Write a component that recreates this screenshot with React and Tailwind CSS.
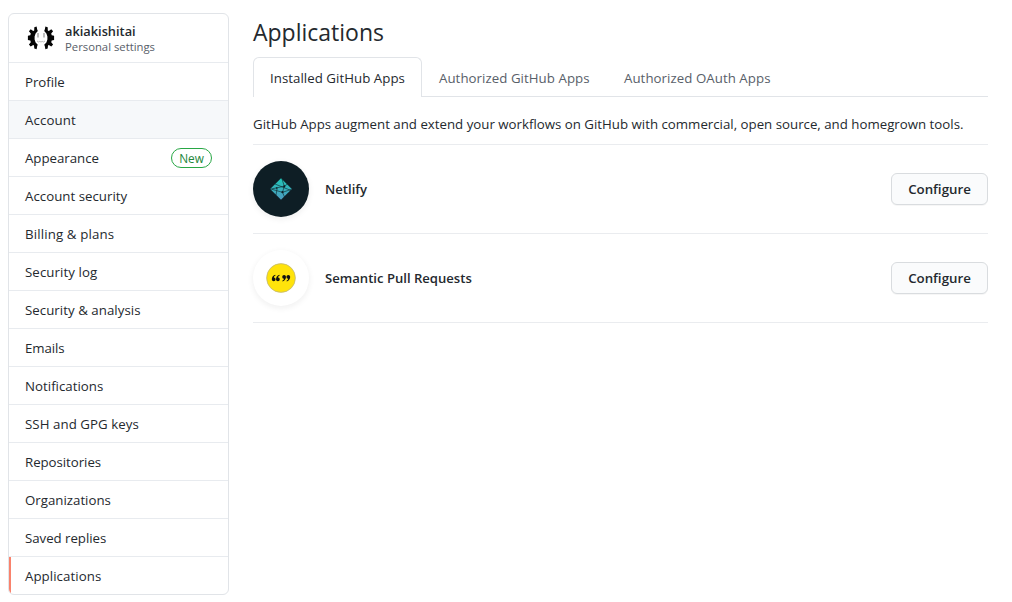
const navItems = [
  { label: "Profile", track: "tracking-[-0.03px]" },
  { label: "Account", track: "tracking-[0.1px]", hovered: true },
  { label: "Appearance", track: "tracking-[-0.03px]", badge: "New" },
  { label: "Account security", track: "tracking-[0.02px]" },
  { label: "Billing & plans", track: "tracking-[0.14px]" },
  { label: "Security log", track: "tracking-[0.08px]" },
  { label: "Security & analysis", track: "tracking-[0.04px]" },
  { label: "Emails", track: "tracking-[-0.1px]" },
  { label: "Notifications", track: "tracking-[0.02px]" },
  { label: "SSH and GPG keys", track: "tracking-[0.06px]" },
  { label: "Repositories", track: "tracking-[-0.05px]" },
  { label: "Organizations", track: "tracking-[0px]" },
  { label: "Saved replies", track: "tracking-[-0.04px]" },
  { label: "Applications", track: "tracking-[0.06px]", current: true },
];

const GEAR_HALF =
  "M9.200 8.400 L9.300 5.200 L11.600 4.400 L12.200 7.600 L12.800 9 L10.600 11.500 L9.600 14.500 L9.600 17.500 L10.600 20.500 L12.800 22.800 L12.200 24 L11.600 27.200 L9.300 26.400 L9 23.400 L8.200 22.900 L5.700 24.400 L3.900 22.400 L5.800 20.200 L5.300 18.400 L2.900 17.900 L2.900 13.700 L5.300 13.200 L5.800 11.400 L3.900 9.200 L5.700 7.200 L8.200 8.900 Z";

function UserAvatar() {
  return (
    <svg className="h-8 w-8 shrink-0" viewBox="0 0 32 32" aria-hidden="true">
      <g fill="#050505">
        <path d={GEAR_HALF} />
        <path transform="translate(32 0) scale(-1 1)" d={GEAR_HALF} />
      </g>
      <path d="M13 11v4.500M19 11v4.500" stroke="#888" strokeWidth="1.100" />
      <path d="M12 19l1.600 1 1.200-.6 1.200.6 1.200-.6 1.200.6 1.600-1" stroke="#bbb" strokeWidth="1" fill="none" />
    </svg>
  );
}

function NetlifyLogo() {
  return (
    <svg className="h-[22px] w-[22px]" viewBox="0 0 22 22" aria-hidden="true">
      <defs>
        <linearGradient id="netlify" x1="0" y1="0" x2="0" y2="1">
          <stop offset="0" stopColor="#20c6b7" />
          <stop offset="1" stopColor="#4d9abf" />
        </linearGradient>
      </defs>
      <path d="M11 .2 21.800 11 11 21.800.2 11Z" fill="url(#netlify)" />
      <g stroke="#0e1e25" strokeWidth="0.6" fill="none">
        <path d="M5 6 21 12.500M0 11.300 14.300 8.200 17.500 6M14.300 8.200 12 1M14.300 8.200 12.500 14.300 14.500 19M12.500 14.300 1.500 11.200M6 17 7.300 9.500M12.500 14.300 21 11.500" />
      </g>
      <g fill="#0e1e25">
        <circle cx="14.300" cy="8.300" r="1.100" />
        <circle cx="12.500" cy="14.200" r="1.100" />
        <circle cx="6.500" cy="10" r="0.7" />
      </g>
    </svg>
  );
}

const QUOTE = "M3.400 0C1.100.8 0 2.500 0 4.700a1.900 1.900 0 1 0 2.100-2c0-.9.500-1.500 1.600-2Z";

function SemanticLogo() {
  return (
    <svg className="h-[30px] w-[30px]" viewBox="0 0 30 30" aria-hidden="true">
      <circle cx="15" cy="15" r="14.400" fill="#ffe30b" stroke="#b9b184" strokeWidth="0.7" />
      <g fill="#111">
        <path transform="translate(5.800 11.800)" d={QUOTE} />
        <path transform="translate(10 11.800)" d={QUOTE} />
        <path transform="translate(20 18.400) rotate(180)" d={QUOTE} />
        <path transform="translate(24.200 18.400) rotate(180)" d={QUOTE} />
      </g>
    </svg>
  );
}

function Sidebar() {
  return (
    <nav className="h-[582px] w-[221px] shrink-0 overflow-hidden rounded-md border border-[#e1e4e8] bg-white">
      <div className="flex h-[49px] items-center gap-2 border-b border-[#e8ebef] pl-4">
        <UserAvatar />
        <div>
          <div className="text-[12.8px] leading-[17px] font-semibold">akiakishitai</div>
          <div className="text-[11.3px] leading-[14px] text-[#586069]">Personal settings</div>
        </div>
      </div>
      {navItems.map((item) => (
        <a
          key={item.label}
          className={
            "flex h-[38px] items-center justify-between border-b border-[#e8ebef] pr-4 last:h-[37px] last:border-b-0 " +
            (item.current ? "border-l-2 border-l-[#f9826c] pl-[14px] " : "pl-4 ") +
            (item.hovered ? "bg-[#f6f8fa]" : "")
          }
        >
          <span className={"pt-0.5 " + item.track}>{item.label}</span>
          {item.badge && (
            <span className="flex h-5 w-[41px] items-center justify-center rounded-full border border-[#28a745] pt-0.5 text-[11.8px] font-medium text-[#22863a]">
              {item.badge}
            </span>
          )}
        </a>
      ))}
    </nav>
  );
}

function AppRow({ name, children, className }) {
  return (
    <div className="flex h-[89px] items-center border-b border-[#eaecef]">
      <div className={"flex h-14 w-14 items-center justify-center rounded-full shadow-[0_2px_6px_rgba(27,31,35,0.07)] " + className}>
        {children}
      </div>
      <span className="ml-4 pt-0.5 text-[13.1px] font-semibold">{name}</span>
      <button className="ml-auto h-8 w-[97px] rounded-md border border-[#d9dcdf] bg-[#fafbfc] pt-0.5 text-[13.3px] font-semibold shadow-[0_1px_0_rgba(27,31,35,0.04)]">
        Configure
      </button>
    </div>
  );
}

export default function App() {
  return (
    <div className="flex h-[602px] w-[1012px] gap-6 overflow-hidden bg-white pt-[13px] pl-2 font-['Open_Sans',sans-serif] text-[13.28px] whitespace-nowrap text-[#24292e]">
      <Sidebar />
      <main className="w-[735px]">
        <h1 className="h-11 text-[23px] leading-[38px]">Applications</h1>
        <div className="flex h-10">
          <div className="flex w-[169px] items-center rounded-t-md border border-b-0 border-[#e1e4e8] pt-0.5 pl-4 tracking-[0.04px]">
            Installed GitHub Apps
          </div>
          <div className="flex w-[185px] items-center border-b border-[#e1e4e8] pt-1 pl-[17px] tracking-[0.05px] text-[#586069]">
            Authorized GitHub Apps
          </div>
          <div className="flex flex-1 items-center border-b border-[#e1e4e8] pt-1 pl-[17px] tracking-[0.05px] text-[#586069]">
            Authorized OAuth Apps
          </div>
        </div>
        <p className="flex h-12 items-center border-b border-[#eaecef] pt-2">
          GitHub Apps augment and extend your workflows on GitHub with commercial, open source, and homegrown tools.
        </p>
        <AppRow name="Netlify" className="bg-[#0e1e25]">
          <NetlifyLogo />
        </AppRow>
        <AppRow name="Semantic Pull Requests" className="bg-white">
          <SemanticLogo />
        </AppRow>
      </main>
    </div>
  );
}
